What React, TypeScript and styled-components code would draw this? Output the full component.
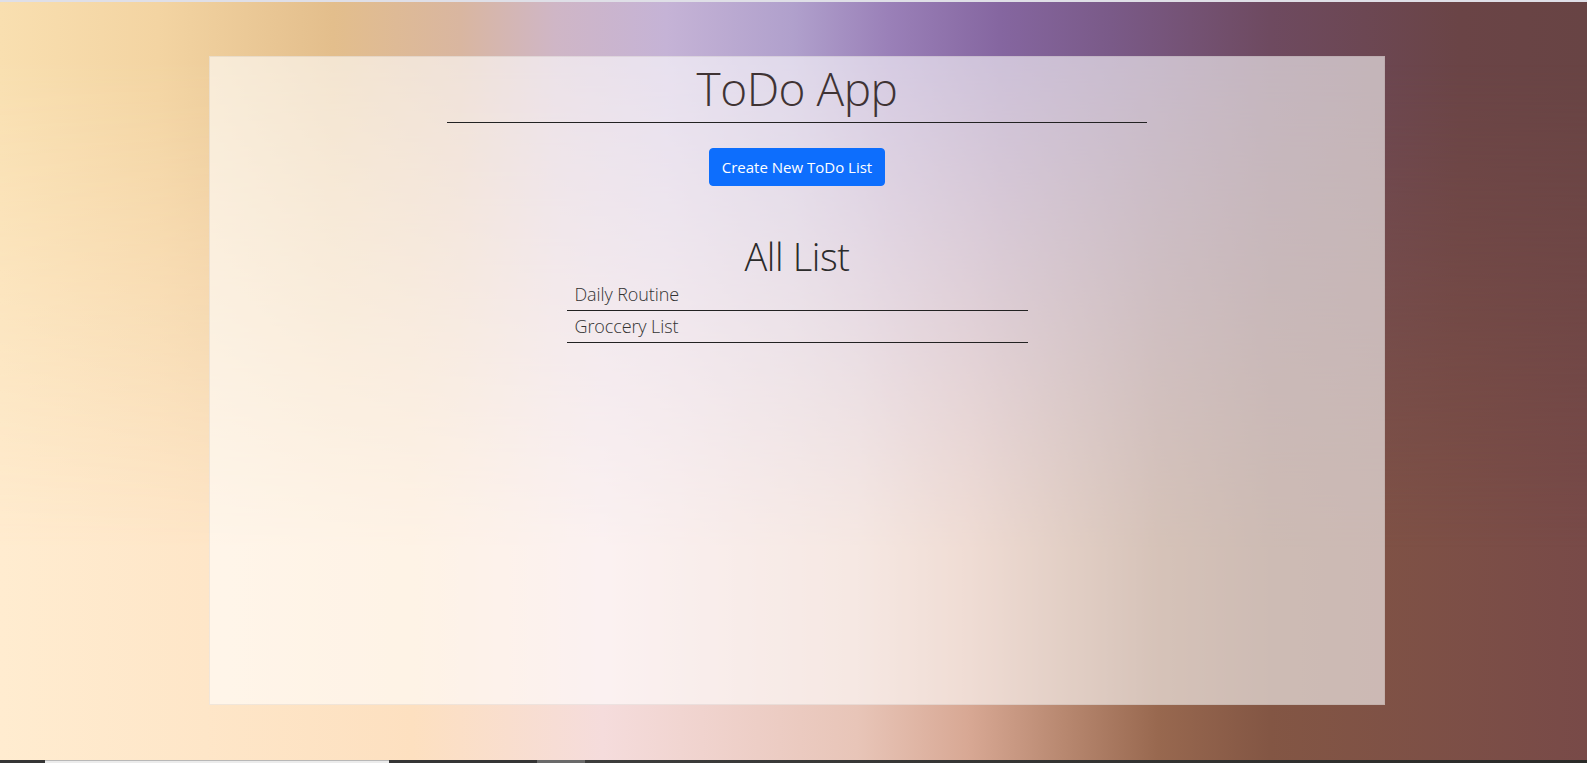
import React from 'react';
import styled, { createGlobalStyle } from 'styled-components';

const GlobalStyle = createGlobalStyle`
  html, body {
    margin: 0;
    padding: 0;
    height: 763px;
    overflow: hidden;
  }

  body {
    font-family: "Open Sans", "Noto Sans", "Liberation Sans", sans-serif;
    color: #333;
  }
`;

const Page = styled.div`
  display: flex;
  flex-direction: column;
  height: 763px;
`;

const TopEdge = styled.div`
  height: 2px;
  background: #dfdfe7;
`;

const Backdrop = styled.main`
  position: relative;
  flex: 1;
  display: flex;
  align-items: flex-start;
  padding: 54px 202px 0 209px;
  background: linear-gradient(
    to right,
    #ffecd0 0%,
    #fde0c0 26%,
    #f5dcdc 38%,
    #e8c5b8 54%,
    #d8a894 61%,
    #b88870 67%,
    #98684f 73%,
    #835644 80%,
    #784a48 100%
  );

  &::before {
    content: '';
    position: absolute;
    inset: 0;
    background: linear-gradient(
      to right,
      #f9dfb0 0%,
      #f3d4a2 10%,
      #e3be8c 21%,
      #d9b6a0 29%,
      #cfb6c6 35%,
      #c5b3d6 42%,
      #b0a0cc 50%,
      #9a80b8 56%,
      #8566a0 63%,
      #7a5a88 70%,
      #6e4a60 80%,
      #6a4446 92%,
      #684444 100%
    );
    -webkit-mask-image: linear-gradient(to bottom, #000 0%, #000 8%, transparent 72%);
    mask-image: linear-gradient(to bottom, #000 0%, #000 8%, transparent 72%);
  }
`;

const Card = styled.section`
  position: relative;
  box-sizing: border-box;
  width: 1176px;
  height: 649px;
  display: flex;
  flex-direction: column;
  align-items: center;
  background: rgba(255, 255, 255, 0.6);
  border: 1px solid rgba(120, 100, 90, 0.1);
`;

const Title = styled.h1`
  margin: 7px 0 0;
  font-size: 46px;
  line-height: 48px;
  font-weight: 300;
  letter-spacing: -0.5px;
  color: #3f3334;
`;

const Rule = styled.hr`
  width: 700px;
  height: 1px;
  margin: 10px 0 0;
  border: 0;
  background: #222;
`;

const PrimaryButton = styled.button`
  margin-top: 25px;
  padding: 6px 12px;
  border: 1px solid #0d6efd;
  border-radius: 4px;
  background: #0d6efd;
  color: #fff;
  font-family: inherit;
  font-size: 15px;
  line-height: 24px;
  cursor: pointer;
`;

const ListHeading = styled.h2`
  margin: 50px 0 0;
  font-size: 38px;
  line-height: 40px;
  font-weight: 300;
  letter-spacing: -0.4px;
  color: #2b2b2b;
`;

const List = styled.ul`
  width: 461px;
  margin: 3px 0 0;
  padding: 0;
  list-style: none;
`;

const ListRow = styled.li`
  padding: 2px 8px;
  font-size: 18px;
  line-height: 27px;
  font-weight: 300;
  letter-spacing: -0.1px;
  color: #333;
  border-bottom: 1px solid #222;
`;

const Taskbar = styled.footer`
  display: flex;
  height: 3px;
  background: linear-gradient(to right, #484848, #2a2a28);
`;

const TaskSlot = styled.div<{ $w: number; $tone: 'dark' | 'light' | 'mid' }>`
  width: ${(p) => p.$w}px;
  background: ${(p) =>
    p.$tone === 'light' ? '#ececec' : p.$tone === 'mid' ? '#6a6a6a' : '#353535'};
  border-top: ${(p) => (p.$tone === 'light' ? '1px solid #b8b8b8' : '0')};
  box-sizing: border-box;
`;

const lists = ['Daily Routine', 'Groccery List'];

export default function App(): React.ReactElement {
  return (
    <Page>
      <GlobalStyle />
      <TopEdge />
      <Backdrop>
        <Card>
          <Title>ToDo App</Title>
          <Rule />
          <PrimaryButton type='button'>Create New ToDo List</PrimaryButton>
          <ListHeading>All List</ListHeading>
          <List>
            {lists.map((name) => (
              <ListRow key={name}>{name}</ListRow>
            ))}
          </List>
        </Card>
      </Backdrop>
      <Taskbar>
        <TaskSlot $tone='dark' $w={45} />
        <TaskSlot $tone='light' $w={344} />
        <TaskSlot $tone='dark' $w={148} />
        <TaskSlot $tone='mid' $w={48} />
      </Taskbar>
    </Page>
  );
}
